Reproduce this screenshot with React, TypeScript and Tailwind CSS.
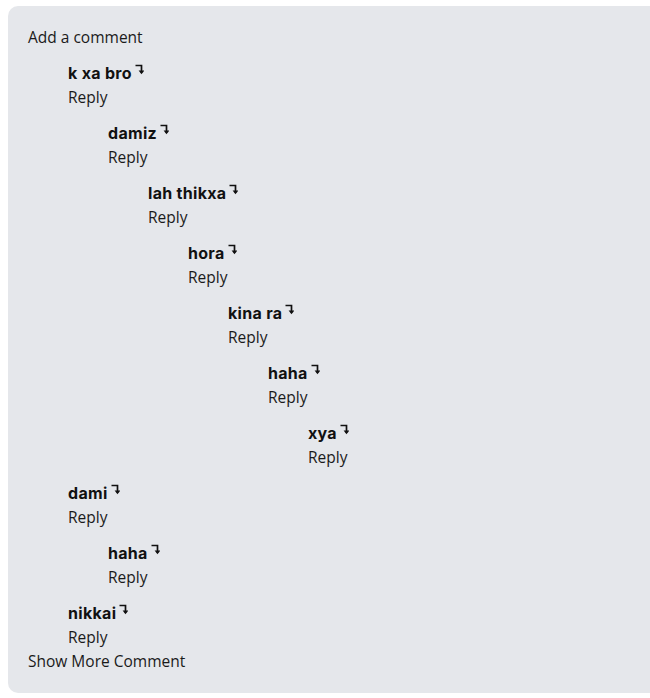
import React from "react";

type C = { name: string; children?: C[] };

const data: C[] = [
  {
    name: "k xa bro",
    children: [
      {
        name: "damiz",
        children: [
          {
            name: "lah thikxa",
            children: [
              {
                name: "hora",
                children: [
                  {
                    name: "kina ra",
                    children: [{ name: "haha", children: [{ name: "xya" }] }],
                  },
                ],
              },
            ],
          },
        ],
      },
    ],
  },
  { name: "dami", children: [{ name: "haha" }] },
  { name: "nikkai" },
];

function Arrow() {
  return (
    <svg width="9" height="11" viewBox="0 0 9 11" className="ml-[3px] mt-[3px] self-start" fill="none">
      <path d="M0.5 1.5H6.5V9" stroke="#111" strokeWidth="1.7" />
      <path d="M3.6 6.6L6.5 10.2L9.4 6.6Z" fill="#111" />
    </svg>
  );
}

function Comment({ c }: { c: C }) {
  return (
    <div className="mt-3 ml-10">
      <div className="flex items-start h-6">
        <span className="text-[16px] leading-6 font-bold text-[#111] tracking-[0.3px]" style={{ fontFamily: "Inter, sans-serif" }}>
          {c.name}
        </span>
        <Arrow />
      </div>
      <div className="leading-6 text-[15.5px] text-[#1a1a1a]">Reply</div>
      {c.children?.map((k, i) => (
        <Comment key={i} c={k} />
      ))}
    </div>
  );
}

export default function App() {
  return (
    <div className="bg-white min-h-[698px] pt-[6px] pl-2" style={{ fontFamily: "'Open Sans', sans-serif" }}>
      <div className="bg-[#e5e7eb] rounded-l-[10px] pl-5 pt-[19px] pb-5 text-[#1a1a1a]">
        <div className="leading-6 text-[15.5px]">Add a comment</div>
        {data.map((c, i) => (
          <Comment key={i} c={c} />
        ))}
        <div className="leading-6 text-[15.5px]">Show More Comment</div>
      </div>
    </div>
  );
}
